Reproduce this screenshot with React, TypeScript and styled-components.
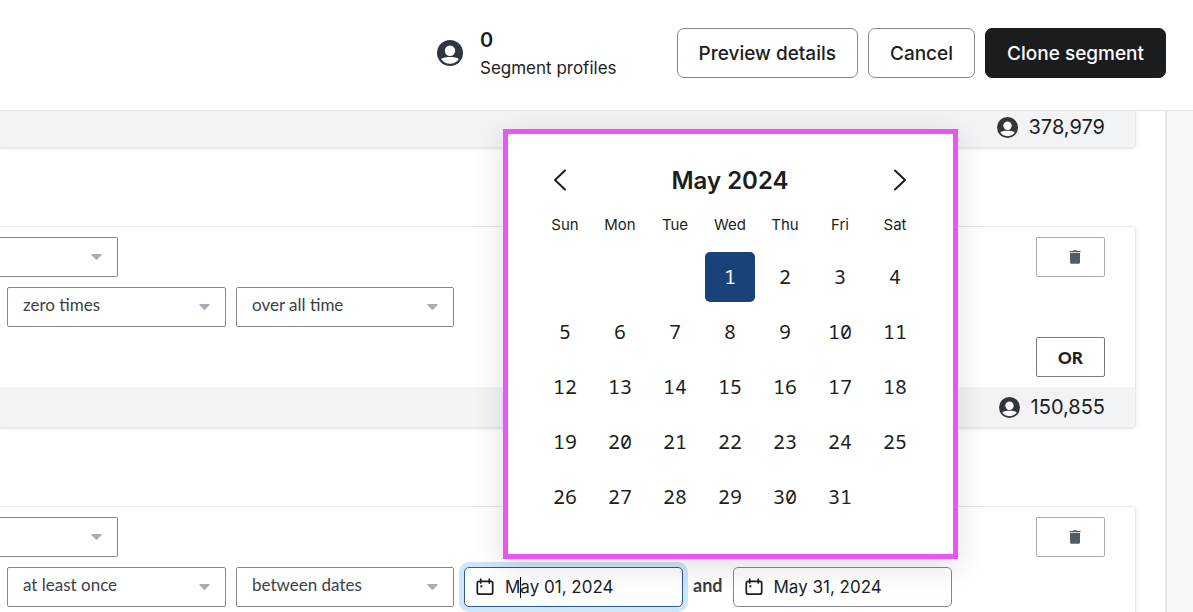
import React from "react";
import styled, { createGlobalStyle, css } from "styled-components";

const ui = `Inter, "Liberation Sans", sans-serif`;
const form = `Lato, "Open Sans", sans-serif`;
const mono = `"Noto Sans Mono", "DejaVu Sans Mono", "Liberation Mono", monospace`;

const GlobalStyle = createGlobalStyle`
  *, *::before, *::after { box-sizing: border-box; }
  body {
    margin: 0;
    background: #f7f8fa;
    color: #1c1e20;
    font-family: ${ui};
  }
  button, input, select { font: inherit; color: inherit; margin: 0; }
`;

const Shell = styled.div`
  display: flex;
  flex-direction: column;
  height: 100vh;
  overflow: hidden;
`;

const Header = styled.header`
  position: relative;
  z-index: 1;
  display: flex;
  flex: none;
  align-items: center;
  justify-content: flex-end;
  gap: 60px;
  padding: 24px 27px 28px 20px;
  background: #fff;
  border-bottom: 1px solid #e3e5e8;
`;

const Stat = styled.div`
  display: flex;
  align-items: center;
  gap: 17px;
`;

const StatText = styled.div`
  padding-top: 2px;
  font-size: 17px;
  line-height: 28px;
`;

const StatValue = styled.div`
  font-size: 20px;
  font-weight: 600;
`;

const Actions = styled.div`
  display: flex;
  align-items: center;
  gap: 10px;
`;

const ActionButton = styled.button<{ $primary?: boolean }>`
  height: 50px;
  padding: 0 21px;
  border: 1px solid ${(p) => (p.$primary ? "#1b1c1e" : "#85878b")};
  border-radius: 7px;
  background: ${(p) => (p.$primary ? "#1b1c1e" : "#fff")};
  color: ${(p) => (p.$primary ? "#fff" : "#1c1e20")};
  font-size: 19px;
  font-weight: 500;
  white-space: nowrap;
`;

const Workspace = styled.main`
  flex: 1;
  min-height: 0;
  margin-right: 26px;
  padding-right: 29px;
  background: #fff;
  border-right: 2px solid #e6e7ea;
`;

const Groups = styled.div`
  display: flex;
  flex-direction: column;
  gap: 78px;
  margin-top: -4px;
`;

const Card = styled.section<{ $continued?: boolean }>`
  border: 1px solid #e6e7ea;
  border-left: 0;
  border-top-width: ${(p) => (p.$continued ? 0 : 1)}px;
  border-radius: 0 5px 5px 0;
  background: #fff;
  box-shadow: 0 1px 3px rgba(30, 34, 44, 0.12);
`;

const CardBody = styled.div`
  display: flex;
  justify-content: space-between;
  padding: 10px 30px 10px 0;
`;

const Rows = styled.div`
  display: flex;
  flex-direction: column;
  gap: 10px;
`;

const Row = styled.div`
  display: flex;
  align-items: center;
  gap: 10px;
  padding-left: 7px;
`;

const CardFooter = styled.footer`
  display: flex;
  align-items: center;
  justify-content: flex-end;
  gap: 11px;
  height: 40px;
  padding-right: 30px;
  border-radius: 0 0 5px 0;
  background: #f2f3f5;
  font-size: 20px;
`;

const SideButtons = styled.div`
  display: flex;
  flex-direction: column;
  gap: 60px;
`;

const SideButton = styled.button<{ $quiet?: boolean }>`
  display: flex;
  align-items: center;
  justify-content: center;
  width: 69px;
  height: 40px;
  padding: 0 0 0 ${(p) => (p.$quiet ? 9 : 0)}px;
  border: 1px solid ${(p) => (p.$quiet ? "#a9acb1" : "#76797f")};
  border-radius: 2px;
  background: #fff;
  font-family: ${form};
  font-size: 17px;
  font-weight: 900;
`;

const SelectBox = styled.div<{ $width: number; $cut?: boolean }>`
  display: grid;
  grid-template-columns: 1fr 26px;
  align-items: center;
  width: ${(p) => p.$width}px;
  height: 40px;
  border: 1px solid #85888e;
  border-radius: 2px;
  ${(p) =>
    p.$cut &&
    css`
      border-left: 0;
      border-radius: 0 2px 2px 0;
    `}

  select {
    grid-area: 1 / 1 / 2 / 3;
    height: 38px;
    padding: 0 26px 5px 15px;
    appearance: none;
    border: 0;
    outline: 0;
    background: transparent;
    color: #3b3f45;
    font-family: ${form};
    font-size: 17px;
  }
  svg {
    grid-area: 1 / 2 / 2 / 3;
    pointer-events: none;
  }
`;

const Joiner = styled.span`
  padding-bottom: 4px;
  color: #3b3f45;
  font-family: ${form};
  font-size: 18px;
  font-weight: 700;
`;

const DateAnchor = styled.div`
  position: relative;
`;

const DateBox = styled.label<{ $active?: boolean }>`
  display: flex;
  align-items: center;
  gap: 11px;
  width: 219px;
  height: 40px;
  padding: 0 11px;
  border: 1px solid ${(p) => (p.$active ? "#2d5c96" : "#85888e")};
  border-radius: 5px;
  background: #fff;
  box-shadow: ${(p) => (p.$active ? "0 0 0 5px #cfe5f8" : "none")};

  svg { flex: none; }
`;

const DateField = styled.span`
  position: relative;
  flex: 1;
  min-width: 0;

  input {
    width: 100%;
    padding: 0;
    border: 0;
    outline: 0;
    background: transparent;
    font-size: 17px;
  }
`;

const TextCaret = styled.span`
  position: absolute;
  top: 0;
  left: 15px;
  width: 1px;
  height: 21px;
  background: #000;
`;

const Popup = styled.div`
  position: absolute;
  left: 39px;
  bottom: calc(100% + 8px);
  padding: 28px 28px 27px 27px;
  border: 5px solid #ea55f5;
  background: #fff;
  box-shadow: 0 8px 28px rgba(30, 34, 60, 0.14);
`;

const MonthBar = styled.div`
  display: flex;
  align-items: center;
  justify-content: space-between;
  height: 36px;
`;

const MonthTitle = styled.h2`
  margin: 0;
  font-size: 24px;
  font-weight: 600;
`;

const NavButton = styled.button`
  display: flex;
  align-items: center;
  justify-content: center;
  width: 50px;
  height: 36px;
  padding: 0 0 1px;
  border: 0;
  background: none;
`;

const MonthTable = styled.table`
  border-collapse: separate;
  border-spacing: 5px;

  th {
    width: 50px;
    height: 44px;
    padding: 0 0 2px;
    font-size: 15px;
    font-weight: 400;
  }
  td { padding: 0; }
`;

const DayButton = styled.button<{ $selected?: boolean }>`
  display: block;
  width: 50px;
  height: 50px;
  padding: 0 0 2px;
  border: 0;
  border-radius: 5px;
  background: ${(p) => (p.$selected ? "#184279" : "none")};
  color: ${(p) => (p.$selected ? "#fff" : "#1c1e20")};
  font-family: ${mono};
  font-size: 20px;
`;

const PersonIcon = ({ size }: { size: number }) => (
  <svg width={size} height={size} viewBox="0 0 26 26" aria-hidden="true">
    <circle cx="13" cy="13" r="13" fill="#30363d" />
    <circle cx="13" cy="10.8" r="5.2" fill="#fff" />
    <path d="M4 18.9C6.4 17.6 9.6 17 13 17s6.600.6 9 1.900C20 22 16.700 23.700 13 23.700S6 22 4 18.900Z" fill="#fff" />
  </svg>
);

const CaretIcon = () => (
  <svg width="11" height="6" viewBox="0 0 11 6" aria-hidden="true">
    <path d="M0.800 0h9.400c.5 0 .7.500.400.900L6.300 5.500a1.100 1.100 0 0 1-1.600 0L.4.900C.1.500.3 0 .8 0Z" fill="#a9adb5" />
  </svg>
);

const TrashIcon = () => (
  <svg width="12" height="14" viewBox="0 0 12 14" aria-hidden="true">
    <path d="M0.500 1H3.600L4.300 0.300H7.700L8.400 1H11.500V2.200H0.500ZM1 3H11V12.300A1.500 1.500 0 0 1 9.500 13.800H2.500A1.500 1.500 0 0 1 1 12.300Z" fill="#535b63" />
  </svg>
);

const CalendarIcon = () => (
  <svg width="18" height="18" viewBox="0 0 18 18" fill="none" stroke="#1c1e20" aria-hidden="true">
    <rect x="1.300" y="3.400" width="15.400" height="12.800" rx="2" strokeWidth="1.700" />
    <path d="M4.700 1.200V5M13.300 1.200V5" strokeWidth="1.700" strokeLinecap="round" />
    <rect x="4.300" y="7.300" width="2" height="2" fill="#1c1e20" stroke="none" />
  </svg>
);

const Chevron = ({ next }: { next?: boolean }) => (
  <svg width="14" height="22" viewBox="0 0 14 22" fill="none" stroke="#1c1e20" strokeWidth="2" strokeLinecap="round" strokeLinejoin="round" aria-hidden="true">
    <path d={next ? "M2 1.500L12 11L2 20.500" : "M12 1.500L2 11L12 20.500"} />
  </svg>
);

const Select = ({ label, value, width, cut }: { label: string; value: string; width: number; cut?: boolean }) => (
  <SelectBox $width={width} $cut={cut}>
    <select aria-label={label} defaultValue={value}>
      <option value={value}>{value}</option>
    </select>
    <CaretIcon />
  </SelectBox>
);

const CountFooter = ({ count }: { count: string }) => (
  <CardFooter>
    <PersonIcon size={21} />
    {count}
  </CardFooter>
);

const weekdays = ["Sun", "Mon", "Tue", "Wed", "Thu", "Fri", "Sat"];
const firstWeekday = 3;
const daysInMonth = 31;
const weeks = Array.from({ length: 5 }, (_, w) =>
  weekdays.map((_, d) => {
    const day = w * 7 + d - firstWeekday + 1;
    return day >= 1 && day <= daysInMonth ? day : null;
  })
);

const DatePicker = () => (
  <Popup role="dialog" aria-label="Choose date">
    <MonthBar>
      <NavButton aria-label="Previous month"><Chevron /></NavButton>
      <MonthTitle>May 2024</MonthTitle>
      <NavButton aria-label="Next month"><Chevron next /></NavButton>
    </MonthBar>
    <MonthTable>
      <thead>
        <tr>{weekdays.map((d) => <th key={d} scope="col">{d}</th>)}</tr>
      </thead>
      <tbody>
        {weeks.map((week, w) => (
          <tr key={w}>
            {week.map((day, d) => (
              <td key={d}>{day && <DayButton $selected={day === 1}>{day}</DayButton>}</td>
            ))}
          </tr>
        ))}
      </tbody>
    </MonthTable>
  </Popup>
);

const DateInput = ({ label, value, active }: { label: string; value: string; active?: boolean }) => (
  <DateBox $active={active}>
    <CalendarIcon />
    <DateField>
      <input type="text" aria-label={label} defaultValue={value} />
      {active && <TextCaret />}
    </DateField>
  </DateBox>
);

export default function App() {
  return (
    <Shell>
      <GlobalStyle />
      <Header>
        <Stat>
          <PersonIcon size={26} />
          <StatText>
            <StatValue>0</StatValue>
            Segment profiles
          </StatText>
        </Stat>
        <Actions>
          <ActionButton>Preview details</ActionButton>
          <ActionButton>Cancel</ActionButton>
          <ActionButton $primary>Clone segment</ActionButton>
        </Actions>
      </Header>
      <Workspace>
        <Groups>
          <Card $continued>
            <CountFooter count="378,979" />
          </Card>
          <Card>
            <CardBody>
              <Rows>
                <Select label="Event" value="" width={118} cut />
                <Row>
                  <Select label="Frequency" value="zero times" width={219} />
                  <Select label="Time range" value="over all time" width={218} />
                </Row>
              </Rows>
              <SideButtons>
                <SideButton $quiet aria-label="Delete condition"><TrashIcon /></SideButton>
                <SideButton>OR</SideButton>
              </SideButtons>
            </CardBody>
            <CountFooter count="150,855" />
          </Card>
          <Card>
            <CardBody>
              <Rows>
                <Select label="Event" value="" width={118} cut />
                <Row>
                  <Select label="Frequency" value="at least once" width={219} />
                  <Select label="Time range" value="between dates" width={218} />
                  <DateAnchor>
                    <DateInput label="Start date" value="May 01, 2024" active />
                    <DatePicker />
                  </DateAnchor>
                  <Joiner>and</Joiner>
                  <DateInput label="End date" value="May 31, 2024" />
                </Row>
              </Rows>
              <SideButtons>
                <SideButton $quiet aria-label="Delete condition"><TrashIcon /></SideButton>
              </SideButtons>
            </CardBody>
          </Card>
        </Groups>
      </Workspace>
    </Shell>
  );
}
